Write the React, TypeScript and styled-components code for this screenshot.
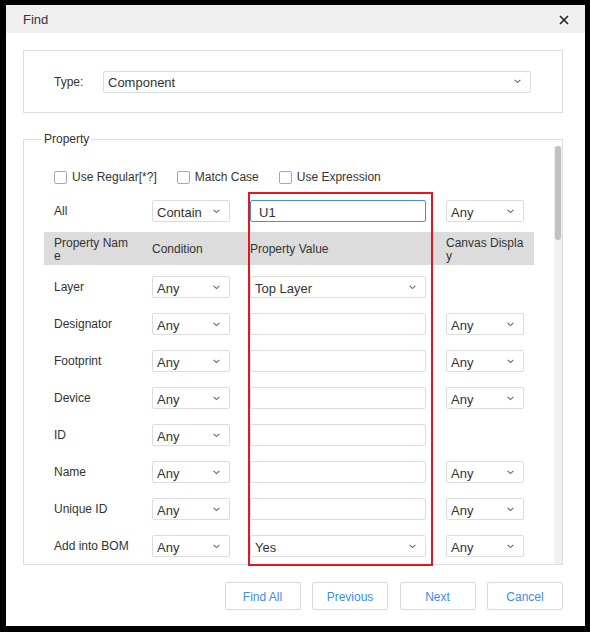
import styled, { createGlobalStyle } from 'styled-components';

const GlobalStyle = createGlobalStyle`
  html, body {
    margin: 0;
    padding: 0;
    background: #000;
  }
  body {
    font-family: "Liberation Sans", Arial, sans-serif;
  }
`;

type ValueKind = 'select' | 'input';

interface PropertyRow {
  label: string;
  kind: ValueKind;
  value?: string;
  canvas: boolean;
}

const rows: PropertyRow[] = [
  { label: 'Layer', kind: 'select', value: 'Top Layer', canvas: false },
  { label: 'Designator', kind: 'input', canvas: true },
  { label: 'Footprint', kind: 'input', canvas: true },
  { label: 'Device', kind: 'input', canvas: true },
  { label: 'ID', kind: 'input', canvas: false },
  { label: 'Name', kind: 'input', canvas: true },
  { label: 'Unique ID', kind: 'input', canvas: true },
  { label: 'Add into BOM', kind: 'select', value: 'Yes', canvas: true },
];

const Chevron = () => (
  <svg width="7" height="5" viewBox="0 0 7 5">
    <polyline points="0.6,0.8 3.5,3.6 6.4,0.8" fill="none" stroke="#666" strokeWidth="1.1" />
  </svg>
);

const Select = ({ text }: { text: string }) => (
  <SelectBox>
    <SelectText>{text}</SelectText>
    <Chevron />
  </SelectBox>
);

const App = () => {
  return (
    <>
      <GlobalStyle />
      <Screen>
        <Dialog>
          <TitleBar>
            <STitle>Find</STitle>
            <svg width="10" height="10" viewBox="0 0 10 10">
              <path d="M1 1 L9 9 M9 1 L1 9" stroke="#222" strokeWidth="1.6" />
            </svg>
          </TitleBar>

          <Body>
            <TypeBox>
              <FieldLabel>Type:</FieldLabel>
              <Select text="Component" />
            </TypeBox>

            <Fieldset>
              <Legend>Property</Legend>
              <Panel>
                <ScrollArea>
                  <OptionsRow>
                    <Option><CheckBox />Use Regular[*?]</Option>
                    <Option><CheckBox />Match Case</Option>
                    <Option><CheckBox />Use Expression</Option>
                  </OptionsRow>

                  <AllRow>
                    <Cell><FieldLabel>All</FieldLabel></Cell>
                    <Cell><Select text="Contain" /></Cell>
                    <Cell><TextInput $focused>U1</TextInput></Cell>
                    <Cell><Select text="Any" /></Cell>
                  </AllRow>

                  <HeaderRow>
                    <HeaderCell>Property Name</HeaderCell>
                    <HeaderCell>Condition</HeaderCell>
                    <HeaderCell>Property Value</HeaderCell>
                    <HeaderCell>Canvas Display</HeaderCell>
                  </HeaderRow>

                  {rows.map((row) => (
                    <DataRow key={row.label}>
                      <Cell><FieldLabel>{row.label}</FieldLabel></Cell>
                      <Cell><Select text="Any" /></Cell>
                      <Cell>
                        {row.kind === 'select' ? (
                          <Select text={row.value ?? ''} />
                        ) : (
                          <TextInput />
                        )}
                      </Cell>
                      <Cell>{row.canvas ? <Select text="Any" /> : null}</Cell>
                    </DataRow>
                  ))}
                </ScrollArea>
                <Track>
                  <Thumb />
                </Track>
              </Panel>
            </Fieldset>

            <ButtonBar>
              <Button>Find All</Button>
              <Button>Previous</Button>
              <Button>Next</Button>
              <Button>Cancel</Button>
            </ButtonBar>
          </Body>

          <Annotation />
        </Dialog>
      </Screen>
    </>
  );
};
export default App;

const Screen = styled.div`
  width: 590px;
  height: 632px;
  box-sizing: border-box;
  padding: 5px 0 0 6px;
`;

const Dialog = styled.div`
  position: relative;
  width: 579px;
  height: 621px;
  background: #ffffff;
  display: flex;
  flex-direction: column;
`;

const TitleBar = styled.div`
  height: 28px;
  box-sizing: border-box;
  padding: 1px 16px 0 17px;
  background: #f0f0f0;
  display: flex;
  align-items: center;
  justify-content: space-between;
`;

const STitle = styled.div`
  font-size: 13px;
  color: #333;
`;

const Body = styled.div`
  padding: 17px 22px 0 17px;
  display: flex;
  flex-direction: column;
`;

const TypeBox = styled.div`
  height: 63px;
  box-sizing: border-box;
  border: 1px solid #dddddd;
  display: grid;
  grid-template-columns: 49px 1fr;
  align-items: center;
  padding: 0 31px 0 30px;
`;

const FieldLabel = styled.div`
  font-size: 12px;
  line-height: 22px;
  color: #333;
  white-space: nowrap;
`;

const SelectBox = styled.div`
  height: 22px;
  box-sizing: border-box;
  border: 1px solid #dcdcdc;
  border-radius: 2px;
  background: #fff;
  display: flex;
  align-items: center;
  justify-content: space-between;
  padding: 0 9px 0 4px;
  font-size: 13px;
  color: #333;
`;

const SelectText = styled.span`
  padding-top: 2px;
`;

const TextInput = styled.div<{ $focused?: boolean }>`
  height: 22px;
  box-sizing: border-box;
  border: 1px solid ${(p) => (p.$focused ? '#3f8fef' : '#dcdcdc')};
  border-radius: 2px;
  background: #fff;
  display: flex;
  align-items: center;
  padding: 2px 8px 0;
  font-size: 13px;
  color: #333;
`;

const Fieldset = styled.fieldset`
  margin: 19px 0 0;
  padding: 0;
  min-width: 0;
  border: 1px solid #dddddd;
`;

const Legend = styled.legend`
  margin-left: 18px;
  padding: 0 2px;
  font-size: 12px;
  line-height: 14px;
  color: #333;
`;

const Panel = styled.div`
  display: flex;
  height: 418px;
`;

const ScrollArea = styled.div`
  flex: 1;
  min-width: 0;
  overflow: hidden;
  padding: 24px 20px 0;
`;

const Track = styled.div`
  width: 8px;
  box-sizing: border-box;
  padding: 0 1px;
  background: #f1f1f1;
`;

const Thumb = styled.div`
  height: 94px;
  border-radius: 3px;
  background: #c1c1c1;
`;

const OptionsRow = styled.div`
  display: flex;
  align-items: center;
  gap: 20px;
  height: 14px;
  padding-left: 10px;
`;

const Option = styled.label`
  display: flex;
  align-items: center;
  gap: 5px;
  font-size: 12px;
  color: #333;
`;

const CheckBox = styled.span`
  width: 13px;
  height: 13px;
  box-sizing: border-box;
  border: 1px solid #a8a8a8;
  border-radius: 2px;
  background: #fff;
`;

const GridRow = styled.div`
  display: grid;
  grid-template-columns: 98px 98px 196px 98px;
  align-items: center;
`;

const AllRow = styled(GridRow)`
  margin-top: 16px;
  height: 22px;
`;

const HeaderRow = styled(GridRow)`
  margin-top: 10px;
  height: 33px;
  box-sizing: border-box;
  padding-top: 2px;
  background: #dcdcdc;
`;

const DataRow = styled(GridRow)`
  height: 37px;
  box-sizing: border-box;
  padding-top: 11px;
  align-items: start;
`;

const Cell = styled.div`
  padding: 0 10px;
  min-width: 0;
`;

const HeaderCell = styled(Cell)`
  font-size: 12px;
  line-height: 13px;
  color: #333;
  word-break: break-all;
`;

const ButtonBar = styled.div`
  margin-top: 17px;
  display: flex;
  justify-content: flex-end;
  gap: 11.5px;
`;

const Button = styled.button`
  width: 76px;
  height: 28px;
  box-sizing: border-box;
  border: 1px solid #d9d9d9;
  border-radius: 2px;
  background: #fff;
  color: #3b8cf3;
  font-family: "Liberation Sans", Arial, sans-serif;
  font-size: 12px;
  padding: 2px 0 0;
`;

const Annotation = styled.div`
  position: absolute;
  left: 242px;
  top: 187px;
  width: 185px;
  height: 374px;
  box-sizing: border-box;
  border: 2px solid #e5161f;
  pointer-events: none;
`;
